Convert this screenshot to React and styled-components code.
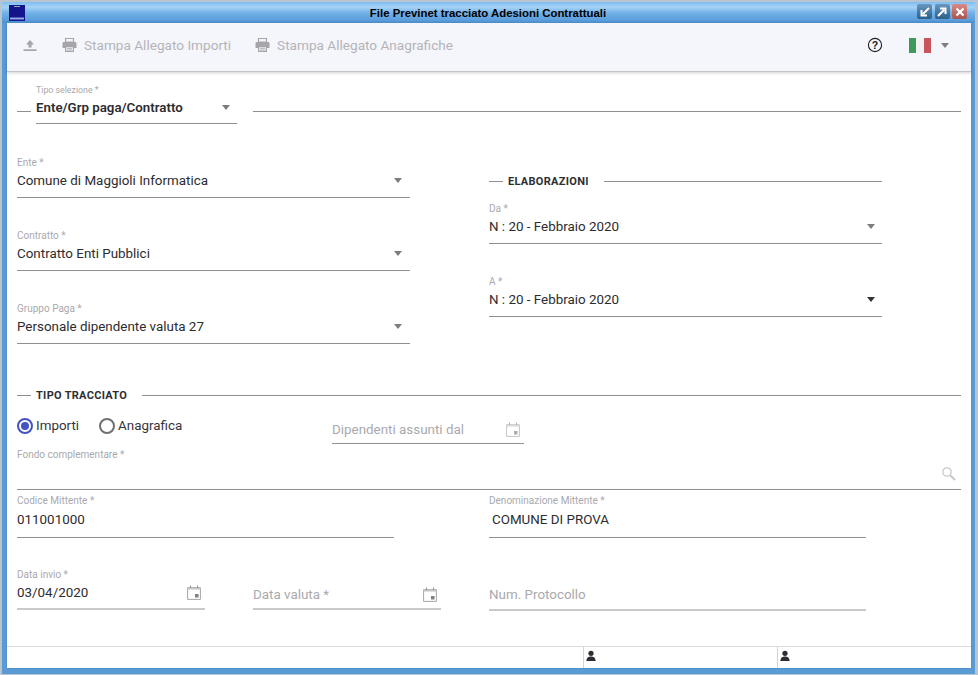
import React from "react";
import styled, { createGlobalStyle } from "styled-components";

const Global = createGlobalStyle`
  html, body { margin: 0; padding: 0; background: #b9c6d2; }
  body { font-family: Roboto, "Liberation Sans", sans-serif; }
  * { box-sizing: border-box; }
`;

const Win = styled.div`
  width: 978px; height: 675px; display: flex; flex-direction: column; overflow: hidden;
  background: #5b9bd5; border: solid #b8c4d0; border-width: 2px 3px 1px 2px;
`;
const TitleBar = styled.div`
  height: 21px; flex: none; display: flex; align-items: center; padding: 0 8px 0 7px;
  background: linear-gradient(#7fbdf0 0%, #a5d3f6 25%, #74b2e8 50%, #5c9fdc 85%, #4e8fca 100%);
`;
const Logo = styled.svg`width: 16px; height: 16px; flex: none;`;
const Title = styled.div`
  flex: 1; text-align: center; font: bold 11.4px "Liberation Sans", Arial, sans-serif; color: #000; margin-right: -34px;
`;
const WinBtns = styled.div`display: flex; gap: 2.5px; margin-top: -2px;`;
const WinBtn = styled.div`
  width: 15px; height: 15px; border-radius: 2px; display: flex; align-items: center; justify-content: center;
  background: ${p => p.$close ? "linear-gradient(#d98a86,#a9544f)" : "linear-gradient(#6a97bd,#2c5f88)"};
`;
const Frame = styled.div`
  flex: 1; margin: 0 4px 6px 5px; background: #fff; display: flex; flex-direction: column; min-height: 0;
  box-shadow: -1px 0 0 #4f92cf, 1px 0 0 #4f92cf, 0 1px 0 #4f92cf;
`;
const Toolbar = styled.div`
  height: 49px; flex: none; background: #f5f6fc; display: flex; align-items: center; padding: 0 0 4px 16px;
  border-bottom: 1px solid #c4c4c4; box-shadow: 0 1px 3px rgba(0,0,0,.18); position: relative;
`;
const ToolBtn = styled.div`
  display: flex; align-items: center; gap: 7px; color: #b4b4b8; font-size: 13.6px; margin-left: ${p => p.$ml || 0}px;
`;
const Spacer = styled.div`flex: 1;`;
const Help = styled.svg`width: 16px; height: 16px; margin-right: 26px; flex:none;`;
const Flag = styled.div`
  width: 22px; height: 15px; margin-right: 10px; display: flex; filter: blur(.3px);
`;
const FlagPart = styled.div`flex: 1; background: ${p => p.$c};`;
const Caret = styled.div`
  width: 0; height: 0; border-left: 4.5px solid transparent; border-right: 4.5px solid transparent;
  border-top: 5px solid ${p => p.$dark ? "#333" : "#7d7d7d"}; flex: none;
`;
const FlagCaret = styled(Caret)`margin-right: 22px;`;

const Body = styled.div`flex: 1; padding: 0 10px; min-height: 0; display: flex; flex-direction: column;`;
const TipoRow = styled.div`display: flex; align-items: flex-start; height: 85px; padding-top: 12px;`;
const LineA = styled.div`width: 14px; height: 1px; background: #8f8f8f; margin: 27px 5px 0 0; flex: none;`;
const LineB = styled.div`flex: 1; height: 1px; background: #8f8f8f; margin: 27px 0 0 16px;`;

const Field = styled.div`
  width: ${p => p.$w}px; height: ${p => p.$h || 41}px; flex: none; display: flex; flex-direction: column;
  border-bottom: ${p => p.$thick ? "2px solid #c9c9c9" : "1px solid #8f8f8f"};
`;
const Label = styled.div`font-size: ${p => p.$small ? 8.8 : 10}px; line-height: 12px; height: 12px; color: #a9a9ad; flex: none;`;
const ValueRow = styled.div`
  flex: 1; display: flex; align-items: center; justify-content: space-between; padding: 0 ${p => p.$pr ?? 8}px ${p => p.$pb ?? 5}px ${p => p.$pl || 0}px;
`;
const Value = styled.div`font-size: ${p => p.$bold ? 13.3 : 13.4}px; color: ${p => p.$muted ? "#a9a9ad" : "#2c2c30"}; font-weight: ${p => p.$bold ? 600 : 400}; white-space: nowrap;`;

const Columns = styled.div`display: flex; height: 230px;`;
const ColLeft = styled.div`width: 472px; flex: none; display: flex; flex-direction: column; gap: 32px;`;
const ColRight = styled.div`width: 393px; flex: none; display: flex; flex-direction: column; padding-top: 16px; gap: 32px;`;
const Heading = styled.div`
  display: flex; align-items: center; font-size: 11px; font-weight: 700; color: #2e2e32; letter-spacing: .3px; height: 16px; flex: none; margin-bottom: ${p => p.$mb || 0}px;
`;
const HLine = styled.div`height: 1px; background: #8f8f8f; flex: ${p => p.$grow ? 1 : "none"}; width: ${p => p.$w || 0}px; margin: ${p => p.$m};`;

const RadioRow = styled.div`display: flex; height: 46px; flex: none;`;
const Radios = styled.div`width: 315px; display: flex; align-items: flex-start; padding-top: 14px; flex: none;`;
const RadioOpt = styled.div`display: flex; align-items: center; gap: 3px; font-size: 13.4px; color: #35353a; margin-right: 20px; height: 17px;`;
const Ring = styled.div`
  width: 16px; height: 16px; border-radius: 50%; flex: none; display: flex; align-items: center; justify-content: center;
  border: 2px solid ${p => p.$on ? "#4353c4" : "#707070"};
`;
const Dot = styled.div`width: 8px; height: 8px; border-radius: 50%; background: #4353c4;`;
const DipField = styled(Field)`margin-top: 12px;`;

const Row = styled.div`display: flex; flex: none; margin-top: ${p => p.$mt || 0}px;`;
const Gap = styled.div`width: ${p => p.$w}px; flex: none;`;

const Footer = styled.div`
  height: 22px; flex: none; border-top: 1px solid #dcdcdc; display: flex; margin-top: auto;
`;
const FootCell = styled.div`
  width: ${p => p.$w}px; flex: none; display: flex; align-items: flex-start; padding: 3px 0 0 1px;
  border-left: ${p => p.$first ? "none" : "1px solid #d4d4d4"};
`;
const Mini = styled.svg`width: 12px; height: 12px;`;

const Upload = () => (
  <svg width="14" height="14" viewBox="0 0 14 14"><path d="M7 2 L11 6.5 H8.6 V9.6 H5.4 V6.5 H3 Z M0.5 11.2 H13.5 V13 H0.5 Z" fill="#a6a6aa" /></svg>
);
const Printer = () => (
  <svg width="15" height="14" viewBox="0 0 15 14">
    <path d="M3.5 .5 H11.5 V4 H3.5 Z" fill="none" stroke="#a6a6aa" strokeWidth="1.2" />
    <path d="M1.6 4 H13.4 Q14.5 4 14.5 5.2 V10 H12 V8 H3 V10 H.5 V5.2 Q.5 4 1.6 4 Z" fill="#a6a6aa" />
    <path d="M3.6 8.6 H11.4 V13.4 H3.6 Z" fill="none" stroke="#a6a6aa" strokeWidth="1.2" />
    <path d="M5 10.4 H10 M5 12 H10" stroke="#a6a6aa" strokeWidth=".8" />
  </svg>
);
const Cal = () => (
  <svg width="14" height="15" viewBox="0 0 14 15" style={{ flex: "none" }}>
    <path d="M.6 2.6 H13.4 V14.4 H.6 Z" fill="none" stroke="#9a9a9a" strokeWidth=".9" />
    <path d="M.6 2.6 H13.4 V4.6 H.6 Z" fill="#c8c8c8" />
    <path d="M3.5 .5 V3 M10.5 .5 V3" stroke="#8d8d8d" strokeWidth="1" />
    <rect x="8" y="9" width="3.5" height="3.5" fill="#808080" />
  </svg>
);
const DipCal = styled.div`opacity: .65; display: flex;`;
const Person = () => (
  <Mini viewBox="0 0 13 13"><circle cx="6.5" cy="3.6" r="2.8" fill="#2a2d33" /><path d="M1.5 12 C1.5 8.2 4 7 6.5 7 C9 7 11.5 8.2 11.5 12 Z" fill="#2a2d33" /></Mini>
);
const Search = () => (
  <svg width="15" height="15" viewBox="0 0 15 15" style={{ flex: "none" }}><circle cx="6" cy="6" r="4.2" fill="none" stroke="#c8c8c8" strokeWidth="1.3" /><path d="M9.2 9.2 L14 14" stroke="#c8c8c8" strokeWidth="2" /></svg>
);

export default function App() {
  return (
    <>
      <Global />
      <Win>
        <TitleBar>
          <Logo viewBox="0 0 16 16"><rect width="16" height="16" fill="#14148c" /><rect x="5" y="1" width="6" height="1" fill="#9aa" /><rect x="1" y="12.5" width="14" height="2" fill="#8fa8e8" /></Logo>
          <Title>File Previnet tracciato Adesioni Contrattuali</Title>
          <WinBtns>
            <WinBtn><svg width="10" height="10" viewBox="0 0 10 10"><path d="M9 1 L3 7 M1.5 3 V8.5 H7" stroke="#fff" strokeWidth="2" fill="none" /></svg></WinBtn>
            <WinBtn><svg width="10" height="10" viewBox="0 0 10 10"><path d="M1 9 L7 3 M3 1.5 H8.5 V7" stroke="#fff" strokeWidth="2" fill="none" /></svg></WinBtn>
            <WinBtn $close><svg width="10" height="10" viewBox="0 0 10 10"><path d="M1.5 1.5 L8.5 8.5 M8.5 1.5 L1.5 8.5" stroke="#fff" strokeWidth="2.2" /></svg></WinBtn>
          </WinBtns>
        </TitleBar>
        <Frame>
          <Toolbar>
            <Upload />
            <ToolBtn $ml={25}><Printer />Stampa Allegato Importi</ToolBtn>
            <ToolBtn $ml={24}><Printer />Stampa Allegato Anagrafiche</ToolBtn>
            <Spacer />
            <Help viewBox="0 0 16 16"><circle cx="8" cy="8" r="6.6" fill="none" stroke="#222" strokeWidth="1.1" /><text x="8" y="11.6" textAnchor="middle" fontSize="10.5" fontWeight="700" fontFamily="Liberation Sans" fill="#222">?</text></Help>
            <Flag><FlagPart $c="#3d9a5c" /><FlagPart $c="#f2f2f2" /><FlagPart $c="#c8545c" /></Flag>
            <FlagCaret />
          </Toolbar>
          <Body>
            <TipoRow>
              <LineA />
              <Field $w={201} $h={40}>
                <Label $small>Tipo selezione *</Label>
                <ValueRow $pb={4} $pr={7}><Value $bold>Ente/Grp paga/Contratto</Value><Caret /></ValueRow>
              </Field>
              <LineB />
            </TipoRow>
            <Columns>
              <ColLeft>
                <Field $w={393}>
                  <Label>Ente *</Label>
                  <ValueRow><Value>Comune di Maggioli Informatica</Value><Caret /></ValueRow>
                </Field>
                <Field $w={393}>
                  <Label>Contratto *</Label>
                  <ValueRow><Value>Contratto Enti Pubblici</Value><Caret /></ValueRow>
                </Field>
                <Field $w={393}>
                  <Label>Gruppo Paga *</Label>
                  <ValueRow><Value>Personale dipendente valuta 27</Value><Caret /></ValueRow>
                </Field>
              </ColLeft>
              <ColRight>
                <Heading $mb={-18}><HLine $w={14} $m="0 5px 0 0" />ELABORAZIONI<HLine $grow $m="0 0 0 15px" /></Heading>
                <Field $w={393}>
                  <Label>Da *</Label>
                  <ValueRow $pr={7}><Value>N : 20 - Febbraio 2020</Value><Caret /></ValueRow>
                </Field>
                <Field $w={393}>
                  <Label>A *</Label>
                  <ValueRow $pr={7}><Value>N : 20 - Febbraio 2020</Value><Caret $dark /></ValueRow>
                </Field>
              </ColRight>
            </Columns>
            <Heading><HLine $w={14} $m="0 5px 0 0" />TIPO TRACCIATO<HLine $grow $m="0 0 0 15px" /></Heading>
            <RadioRow>
              <Radios>
                <RadioOpt><Ring $on><Dot /></Ring>Importi</RadioOpt>
                <RadioOpt><Ring />Anagrafica</RadioOpt>
              </Radios>
              <DipField $w={192} $h={29}>
                <ValueRow $pr={4} $pb={0}><Value $muted>Dipendenti assunti dal</Value><DipCal><Cal /></DipCal></ValueRow>
              </DipField>
            </RadioRow>
            <Field $w={944} $h={41}>
              <Label>Fondo complementare *</Label>
              <ValueRow $pr={5} $pb={4}><span /><Search /></ValueRow>
            </Field>
            <Row $mt={5}>
              <Field $w={377} $h={43}>
                <Label>Codice Mittente *</Label>
                <ValueRow><Value>011001000</Value></ValueRow>
              </Field>
              <Gap $w={95} />
              <Field $w={377} $h={43}>
                <Label>Denominazione Mittente *</Label>
                <ValueRow $pl={3}><Value>COMUNE DI PROVA</Value></ValueRow>
              </Field>
            </Row>
            <Row $mt={31}>
              <Field $w={188} $h={41} $thick>
                <Label>Data invio *</Label>
                <ValueRow $pr={4}><Value>03/04/2020</Value><Cal /></ValueRow>
              </Field>
              <Gap $w={48} />
              <Field $w={188} $h={41} $thick>
                <Label />
                <ValueRow $pr={4} $pb={1}><Value $muted>Data valuta *</Value><Cal /></ValueRow>
              </Field>
              <Gap $w={48} />
              <Field $w={377} $h={42} $thick>
                <Label />
                <ValueRow $pr={4} $pb={2}><Value $muted>Num. Protocollo</Value></ValueRow>
              </Field>
            </Row>
          </Body>
          <Footer>
            <FootCell $w={576} $first />
            <FootCell $w={194}><Person /></FootCell>
            <FootCell $w={194}><Person /></FootCell>
          </Footer>
        </Frame>
      </Win>
    </>
  );
}
